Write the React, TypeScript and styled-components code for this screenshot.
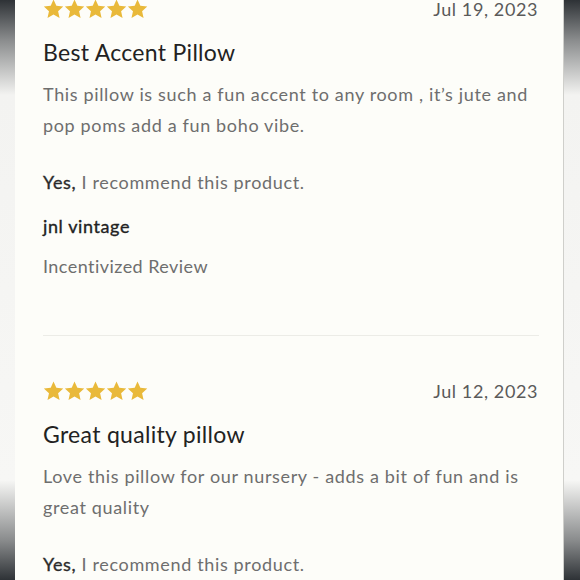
import styled, { createGlobalStyle } from 'styled-components';

const GlobalStyle = createGlobalStyle`
  html, body {
    margin: 0;
    padding: 0;
    background: #f5f5f3;
  }
  body {
    font-family: Lato, "Liberation Sans", sans-serif;
  }
`;

const reviews = [
  {
    title: 'Best Accent Pillow',
    date: 'Jul 19, 2023',
    body: 'This pillow is such a fun accent to any room , it’s jute and pop poms add a fun boho vibe.',
    author: 'jnl vintage',
    note: 'Incentivized Review',
  },
  {
    title: 'Great quality pillow',
    date: 'Jul 12, 2023',
    body: 'Love this pillow for our nursery - adds a bit of fun and is great quality',
    author: 'jenny',
    note: 'Incentivized Review',
  },
];

const Star = () => (
  <svg width="21" height="20" viewBox="0 0 24 23" aria-hidden="true">
    <path
      d="M12 0.6l3.3 7.2 7.9 0.9-5.9 5.3 1.7 7.8L12 17.8l-6.9 4 1.7-7.8L0.9 8.7l7.9-0.9z"
      fill="#e9b93a"
    />
  </svg>
);

const Page = () => {
  return (
    <Frame>
      <GlobalStyle />
      <Edge />
      <Card>
        <List>
          {reviews.map((r, i) => (
            <Review key={r.date} $last={i === reviews.length - 1}>
              <Header>
                <Stars>
                  {[0, 1, 2, 3, 4].map((n) => (
                    <Star key={n} />
                  ))}
                </Stars>
                <DateText>{r.date}</DateText>
              </Header>
              <Title>{r.title}</Title>
              <Body>{r.body}</Body>
              <Recommend>
                <strong>Yes,</strong> I recommend this product.
              </Recommend>
              <Author>{r.author}</Author>
              <Note>{r.note}</Note>
            </Review>
          ))}
        </List>
      </Card>
      <Edge />
    </Frame>
  );
};

const Frame = styled.div`
  display: flex;
  width: 580px;
  height: 580px;
  overflow: hidden;
`;

const Edge = styled.div`
  flex: 0 0 15px;
  background: linear-gradient(
    180deg,
    #2e3236 0px,
    #8a8c8d 40px,
    #f3f3f1 95px,
    #f7f7f5 480px,
    #8a8c8d 540px,
    #2e3236 580px
  );

  &:last-child {
    flex-basis: 16px;
  }
`;

const Card = styled.div`
  flex: 1;
  background: #fdfdf9;
  border-right: 1px solid #cfcfcb;
  overflow: hidden;
  padding: 0 24px 0 28px;
`;

const List = styled.div`
  display: flex;
  flex-direction: column;
  margin-top: -1px;
`;

const Review = styled.article<{ $last?: boolean }>`
  display: flex;
  flex-direction: column;
  padding-bottom: 56px;
  margin-bottom: 45px;
  border-bottom: ${(p) => (p.$last ? 'none' : '1px solid #ecece7')};
`;

const Header = styled.div`
  display: flex;
  align-items: center;
  justify-content: space-between;
  height: 20px;
`;

const Stars = styled.div`
  display: flex;
  gap: 0;
`;

const DateText = styled.span`
  font-size: 18px;
  color: #5a5a5a;
  letter-spacing: 0.6px;
  line-height: 20px;
  margin-right: 1px;
`;

const Title = styled.h3`
  margin: 18px 0 0;
  font-size: 23px;
  line-height: 30px;
  font-weight: 400;
  color: #222;
  letter-spacing: 0.3px;
`;

const Body = styled.p`
  margin: 12px 0 0;
  font-size: 18px;
  line-height: 31px;
  color: #6e6e6e;
  letter-spacing: 0.65px;
`;

const Recommend = styled.p`
  margin: 28px 0 0;
  font-size: 18px;
  line-height: 26px;
  color: #6e6e6e;
  letter-spacing: 0.65px;

  strong {
    color: #2b2b2b;
    font-weight: 400;
    -webkit-text-stroke: 0.35px #2b2b2b;
  }
`;

const Author = styled.p`
  margin: 18px 0 0;
  font-size: 18px;
  line-height: 26px;
  color: #222;
  font-weight: 400;
  -webkit-text-stroke: 0.35px #222;
  letter-spacing: 0.6px;
`;

const Note = styled.p`
  margin: 14px 0 0;
  font-size: 18px;
  line-height: 26px;
  color: #6e6e6e;
  letter-spacing: 0.45px;
`;

export default Page;
